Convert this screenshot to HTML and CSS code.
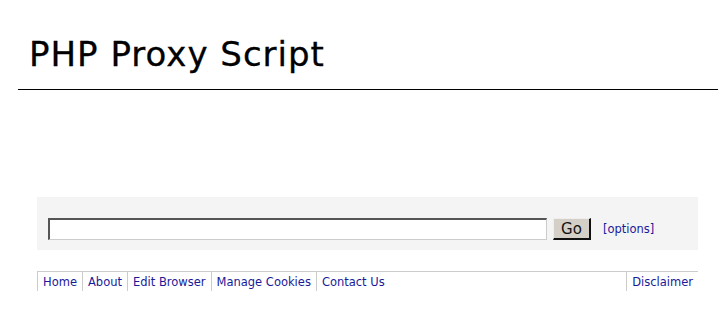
FILE: index.html
```html
<!DOCTYPE html>
<html>
<head>
<meta charset="utf-8">
<title>PHP Proxy Script</title>
<link rel="stylesheet" href="styles.css">
</head>
<body>
<div class="header">
  <h1 class="title">PHP Proxy Script</h1>
</div>
<div class="main">
  <form class="url-box">
    <input class="url-input" type="text">
    <button class="go-btn" type="button">Go</button>
    <a class="options" href="#">[options]</a>
  </form>
  <ul class="nav">
    <li><a href="#">Home</a></li>
    <li><a href="#">About</a></li>
    <li><a href="#">Edit Browser</a></li>
    <li><a href="#">Manage Cookies</a></li>
    <li><a href="#">Contact Us</a></li>
    <li class="right"><a href="#">Disclaimer</a></li>
  </ul>
</div>
</body>
</html>
```

FILE: styles.css
```css
html, body {
  margin: 0;
  padding: 0;
  background: #fff;
}
body {
  font-family: "DejaVu Sans", sans-serif;
  color: #000;
}
.header {
  margin: 0 10px 0 18px;
  border-bottom: 1px solid #000;
  padding: 29px 0 0 11px;
  box-sizing: border-box;
  height: 90px;
}
.title {
  margin: 0;
  font-weight: normal;
  font-size: 34px;
  letter-spacing: 1px;
  line-height: 50px;
  -webkit-text-stroke: 0.3px #000;
}
.main {
  margin: 107px 0 0 37px;
  width: 661px;
}
.url-box {
  margin: 0;
  background: #f4f4f4;
  height: 53px;
  box-sizing: border-box;
  padding: 21px 0 0 11px;
  display: flex;
  align-items: flex-start;
}
.url-input {
  width: 499px;
  height: 22px;
  box-sizing: border-box;
  margin: 0;
  padding: 0;
  border-style: solid;
  border-width: 2px 1px 1px 2px;
  border-color: #555 #ccc #ccc #555;
  background: #fff;
}
.go-btn {
  margin: 0 0 0 6px;
  width: 38px;
  height: 22px;
  box-sizing: border-box;
  padding: 0;
  background: #d4d0c8;
  border-style: solid;
  border-width: 1px 2px 2px 1px;
  border-color: #eee #111 #111 #eee;
  font-family: "DejaVu Sans", sans-serif;
  font-size: 15px;
  color: #111;
}
.options {
  margin: 4px 0 0 12px;
  font-size: 11.5px;
  color: #1a1a99;
  text-decoration: none;
}
.nav {
  list-style: none;
  margin: 21px 0 0 0;
  padding: 0;
  display: flex;
  border-top: 1px solid #ccc;
}
.nav li {
  border-left: 1px solid #ccc;
  padding: 2px 5px 3px 5px;
  height: 14px;
  line-height: 14px;
}
.nav li.right {
  margin-left: auto;
}
.nav a {
  font-size: 11.5px;
  color: #1a1a99;
  text-decoration: none;
}
```
